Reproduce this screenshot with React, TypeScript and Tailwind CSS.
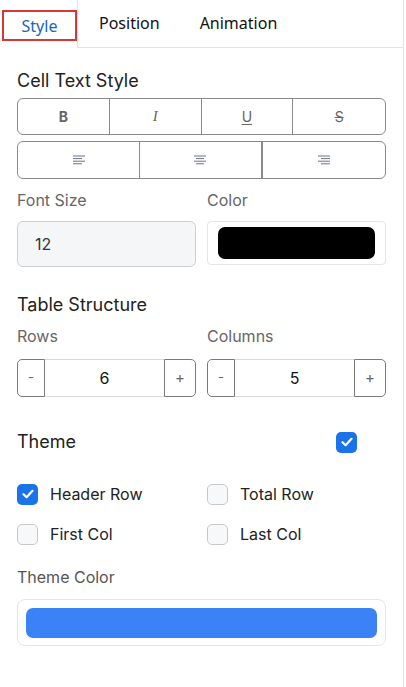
import React, { useState } from "react";

const font = { fontFamily: "Inter, 'Noto Sans', sans-serif" };

function AlignIcon({ kind }: { kind: "left" | "center" | "right" }) {
  const lines =
    kind === "left"
      ? [[0, 12], [0, 9], [0, 12], [0, 9]]
      : kind === "center"
      ? [[0, 12], [2, 10], [0, 12], [2, 10]]
      : [[0, 12], [3, 12], [0, 12], [3, 12]];
  return (
    <svg width="12" height="10" viewBox="0 0 12 10" className="text-gray-500">
      {lines.map(([a, b], i) => (
        <line key={i} x1={a} x2={b} y1={1 + i * 2.6} y2={1 + i * 2.6} stroke="currentColor" strokeWidth="1" />
      ))}
    </svg>
  );
}

function Check({ on }: { on: boolean }) {
  return on ? (
    <span className="flex h-[21px] w-[21px] items-center justify-center rounded-[5px] bg-[#1a73e8]">
      <svg width="12" height="10" viewBox="0 0 12 10">
        <path d="M1.5 5.2 4.6 8.2 10.5 1.8" fill="none" stroke="white" strokeWidth="2.2" strokeLinecap="round" strokeLinejoin="round" />
      </svg>
    </span>
  ) : (
    <span className="block h-[21px] w-[21px] rounded-[5px] border border-[#c8c8c8] bg-[#f7f8fa]" />
  );
}

function Stepper({ value }: { value: number }) {
  return (
    <div className="flex h-[38px] flex-1 items-stretch">
      <button className="w-[28px] rounded-l-[5px] border border-[#7a7a7a] text-[13px] text-[#666]">-</button>
      <div className="flex flex-1 items-center justify-center border-y border-[#d9d9d9] text-[16px] text-[#111]">
        {value}
      </div>
      <button className="w-[32px] rounded-r-[5px] border border-[#7a7a7a] text-[15px] text-[#666]">+</button>
    </div>
  );
}

export default function App() {
  const [opts, setOpts] = useState({ header: true, total: false, first: false, last: false });
  const toggle = (k: keyof typeof opts) => setOpts({ ...opts, [k]: !opts[k] });

  return (
    <div className="min-h-[687px] w-[406px] bg-white" style={font}>
      <div className="min-h-[687px] w-[404px] border-r border-[#e6e6e6]">
        <div className="flex h-[48px] items-start" style={{ fontFamily: "'Noto Sans', 'Open Sans', sans-serif" }}>
          <div className="mt-[10px] ml-[2px] flex h-[31px] w-[75px] items-center justify-center border-2 border-[#d93636] text-[16px] text-[#1565c0]">
            Style
          </div>
          <div className="flex h-[48px] flex-1 items-center gap-[40px] border-b border-l border-[#e2e2e2] pl-[21px] pb-[2px] text-[16px] text-[#111]">
            <span>Position</span>
            <span>Animation</span>
          </div>
        </div>

        <div className="px-[17px] pt-[20px]">
          <h2 className="text-[18px] leading-[26px] text-[#222]">Cell Text Style</h2>
          <div className="mt-[4px] grid h-[37px] grid-cols-4 rounded-[6px] border border-[#8a8a8a]">
            <button className="border-r border-[#8a8a8a] text-[14px] font-bold text-[#666]">B</button>
            <button className="border-r border-[#8a8a8a] text-[15px] italic text-[#666]" style={{ fontFamily: "'Liberation Serif', serif" }}>I</button>
            <button className="border-r border-[#8a8a8a] text-[14px] text-[#666] underline underline-offset-2">U</button>
            <button className="text-[14px] text-[#666] line-through">S</button>
          </div>
          <div className="mt-[6px] grid h-[38px] grid-cols-3 rounded-[6px] border border-[#8a8a8a]">
            <button className="flex items-center justify-center border-r border-[#8a8a8a]"><AlignIcon kind="left" /></button>
            <button className="flex items-center justify-center border-r-2 border-[#8a8a8a]"><AlignIcon kind="center" /></button>
            <button className="flex items-center justify-center"><AlignIcon kind="right" /></button>
          </div>

          <div className="mt-[9px] flex gap-[11px]">
            <div className="flex-1">
              <div className="text-[16px] leading-[24px] text-[#666]">Font Size</div>
              <div className="mt-[9px] flex h-[46px] items-center rounded-[6px] border border-[#cfcfcf] bg-[#f5f6f8] pl-[17px] text-[16px] text-[#333]">
                12
              </div>
            </div>
            <div className="flex-1">
              <div className="text-[16px] leading-[24px] text-[#666]">Color</div>
              <div className="mt-[9px] flex h-[44px] items-center rounded-[4px] border border-[#e6e6e6] px-[10px]">
                <div className="h-[32px] w-full rounded-[7px] bg-black" />
              </div>
            </div>
          </div>

          <h2 className="mt-[25px] text-[18px] leading-[26px] text-[#222]">Table Structure</h2>
          <div className="mt-[6px] flex gap-[11px]">
            <div className="flex flex-1 flex-col">
              <div className="text-[16px] leading-[24px] text-[#666]">Rows</div>
              <div className="mt-[11px] flex"><Stepper value={6} /></div>
            </div>
            <div className="flex flex-1 flex-col">
              <div className="text-[16px] leading-[24px] text-[#666]">Columns</div>
              <div className="mt-[11px] flex"><Stepper value={5} /></div>
            </div>
          </div>

          <div className="mt-[32px] flex items-center justify-between pr-[29px]">
            <h2 className="text-[18px] leading-[26px] text-[#222]">Theme</h2>
            <Check on />
          </div>

          <div className="mt-[27px] grid grid-cols-2 gap-x-[11px] gap-y-[16px] text-[16px] text-[#222]">
            <label className="flex items-center gap-[12px]" onClick={() => toggle("header")}>
              <Check on={opts.header} /> Header Row
            </label>
            <label className="flex items-center gap-[12px]" onClick={() => toggle("total")}>
              <Check on={opts.total} /> Total Row
            </label>
            <label className="flex items-center gap-[12px]" onClick={() => toggle("first")}>
              <Check on={opts.first} /> First Col
            </label>
            <label className="flex items-center gap-[12px]" onClick={() => toggle("last")}>
              <Check on={opts.last} /> Last Col
            </label>
          </div>

          <div className="mt-[19px] text-[16px] leading-[24px] text-[#555]">Theme Color</div>
          <div className="mt-[10px] flex h-[47px] items-center rounded-[8px] border border-[#e6e6e6] px-[8px]">
            <div className="h-[30px] w-full rounded-[7px] bg-[#3b82f6]" />
          </div>
        </div>
      </div>
    </div>
  );
}
